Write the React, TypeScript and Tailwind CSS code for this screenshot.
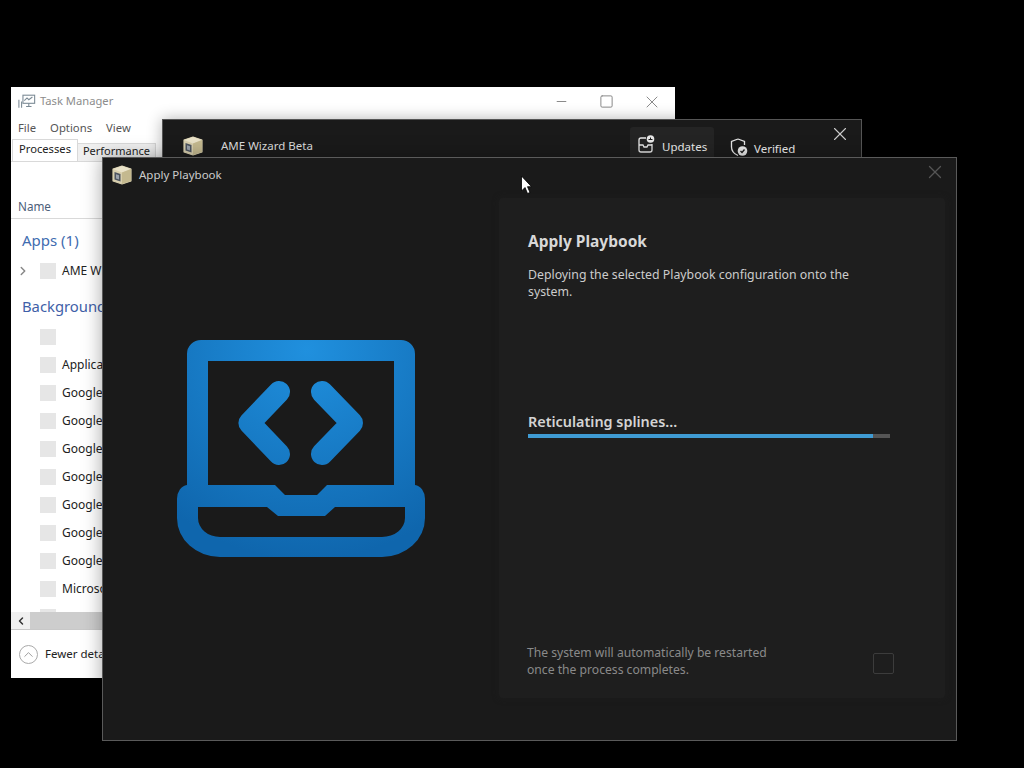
import { ChevronLeft, ChevronRight, ChevronUp, Minus, Square, X } from 'lucide-react';

const backgroundRows = ['', 'Applications', 'Google', 'Google', 'Google', 'Google', 'Google', 'Google', 'Google', 'Microsoft', ''];

function BoxLogo({ className }: { className?: string }) {
  return (
    <svg viewBox="0 0 20 20" className={className}>
      <path d="M10 1 19 4v12l-9 3-9-3V4z" fill="#d8cfae" stroke="#d8cfae" strokeWidth="1.200" strokeLinejoin="round" />
      <path d="M10 1 19 4 10 7.500 1 4z" fill="#e9e2c8" />
      <path d="M10 7.500 19 4v12l-9 3z" fill="#c4b98f" />
      <path d="M2.500 7 8.500 9v7.500l-6-2z" fill="#4d5560" />
      <path d="M4 9.200 7 10.200v4.400l-3-1z" fill="#9aa2ac" />
    </svg>
  );
}

function LaptopCode() {
  return (
    <svg viewBox="0 0 248 217" className="w-[248px] h-[217px]">
      <defs>
        <radialGradient id="laptopBlue" gradientUnits="userSpaceOnUse" cx="130" cy="10" r="210">
          <stop offset="0%" stopColor="#2090de" />
          <stop offset="100%" stopColor="#0f66ad" />
        </radialGradient>
      </defs>
      <path
        fillRule="evenodd"
        fill="url(#laptopBlue)"
        d="M24 0H224A14 14 0 0 1 238 14V145A11 14 0 0 1 248 159V178A43 39 0 0 1 205 217H43A43 39 0 0 1 0 178V159A11 14 0 0 1 10 145V14A14 14 0 0 1 24 0ZM31 21V145H98L108 155H140L150 145H217V21ZM21 167V178A22 19 0 0 0 43 197H205A23 19 0 0 0 228 178V167H158L148 176H101L90 167Z"
      />
      <path
        d="M102 52 72.400 83 102 114M145 52 175 83 145 114"
        fill="none"
        stroke="url(#laptopBlue)"
        strokeWidth="22"
        strokeLinecap="round"
        strokeLinejoin="round"
      />
    </svg>
  );
}

function TaskRow({ label, expand }: { label: string; expand?: boolean }) {
  return (
    <div className="h-[28px] flex items-center shrink-0">
      <div className="w-[29px] flex justify-center pr-[5px]">
        {expand && <ChevronRight className="w-[14px] h-[14px] text-[#888]" strokeWidth={2.500} />}
      </div>
      <div className="w-[16px] h-[16px] bg-[#e6e6e6]" />
      <span className="ml-[6px] text-[12px] text-[#222] whitespace-nowrap">{label}</span>
    </div>
  );
}

function TaskManager() {
  return (
    <div className="absolute left-[11px] top-[87px] w-[664px] h-[591px] bg-white overflow-hidden flex flex-col">
      <div className="h-[29px] shrink-0 flex items-center pl-[7px] pr-[16px]">
        <svg viewBox="0 0 20 16" className="w-[18px] h-[15px] text-[#7b8a95]" fill="none" stroke="currentColor" strokeWidth="1.200">
          <rect x="5.500" y="1" width="13" height="9" />
          <path d="M7 7l3-3 2 2 4-3M12 10v3M9 13.500h6M1 6v9M4 8v7" />
        </svg>
        <span className="ml-[4px] text-[11.200px] text-[#8c8c8c]">Task Manager</span>
        <div className="ml-auto flex items-center gap-[30px] text-[#8a8a8a]">
          <Minus className="w-[15px] h-[15px]" strokeWidth={1.600} />
          <Square className="w-[15px] h-[15px]" strokeWidth={1.600} />
          <X className="w-[20px] h-[20px] -mx-[2.500px]" strokeWidth={1.200} />
        </div>
      </div>
      <div className="h-[24px] shrink-0 flex items-center gap-[14px] pl-[7px] text-[11.300px] text-[#555]">
        <span>File</span>
        <span>Options</span>
        <span>View</span>
      </div>
      <div className="h-[22px] shrink-0 flex items-end border-b border-[#d9d9d9] pl-px">
        <div className="h-[22px] w-[66px] pb-[2px] bg-white border border-b-0 border-[#d9d9d9] flex items-center justify-center text-[11.200px] text-[#222]">Processes</div>
        <div className="h-[18px] w-[78px] pb-[2px] bg-[#f0f0f0] border-r border-t border-[#d9d9d9] flex items-center justify-center text-[11px] text-[#222]">Performance</div>
      </div>
      <div className="h-[57px] shrink-0 flex items-end border-b border-[#d9d9d9] pl-[7px] pb-[2px] text-[11.700px] text-[#4c607a]">Name</div>
      <div className="flex-1 min-h-0 overflow-hidden flex flex-col">
        <div className="h-[38px] shrink-0 flex items-end pl-[11px] pb-[6px] text-[15px] text-[#3f6cb0]">Apps (1)</div>
        <TaskRow label="AME Wizard Beta" expand />
        <div className="h-[38px] shrink-0 flex items-end pl-[11px] pb-[6px] text-[14.800px] text-[#3f5fa8] whitespace-nowrap">Background processes</div>
        {backgroundRows.map((row, i) => (
          <TaskRow key={i} label={row} />
        ))}
      </div>
      <div className="h-[18px] shrink-0 flex bg-[#cdcdcd] border-b border-[#c8c8c8]">
        <div className="w-[19px] bg-[#f0f0f0] flex items-center justify-center">
          <ChevronLeft className="w-[12px] h-[12px] text-[#333]" strokeWidth={3} />
        </div>
      </div>
      <div className="h-[48px] shrink-0 flex items-center pl-[8px] text-[11.500px] text-[#222]">
        <div className="w-[19px] h-[19px] rounded-full border border-[#aaa] flex items-center justify-center">
          <ChevronUp className="w-[15px] h-[15px] text-[#999]" strokeWidth={1.500} />
        </div>
        <span className="ml-[7px] whitespace-nowrap">Fewer details</span>
      </div>
    </div>
  );
}

function WizardWindow() {
  return (
    <div className="absolute left-[162px] top-[119px] w-[700px] h-[120px] bg-[#1a1a1a] border border-[#555] shadow-[0_0_14px_rgba(0,0,0,0.3)]">
      <div className="h-[50px] flex items-start pl-[20px] text-[11.500px] text-[#ddd]">
        <BoxLogo className="w-[20px] h-[20px] mt-[16px] shrink-0" />
        <span className="ml-[18px] mt-[17px] w-[409px] shrink-0">AME Wizard Beta</span>
        <div className="w-[84px] h-[40px] mt-[7px] bg-[#242424] rounded-[3px] flex items-start pl-[8px] pt-[8px] shrink-0">
          <svg viewBox="0 0 17 19" className="w-[17px] h-[19px]" fill="none" stroke="#e8e8e8" strokeWidth="1.300">
            <path d="M8 3H3a2 2 0 0 0-2 2v10a2 2 0 0 0 2 2h9a2 2 0 0 0 2-2V9" />
            <path d="M1 10h4l1 2h3l1-2h4" />
            <circle cx="12.500" cy="4" r="3.800" fill="#e8e8e8" stroke="none" />
            <path d="M10.500 4.500h4M12.500 2.500v2" stroke="#1a1a1a" strokeWidth="1" />
          </svg>
          <span className="ml-[7px] mt-[3px] text-[#eee]">Updates</span>
        </div>
        <div className="ml-[16px] flex items-start mt-[18px] shrink-0">
          <svg viewBox="0 0 18 19" className="w-[18px] h-[19px]" fill="none" stroke="#e8e8e8" strokeWidth="1.300">
            <path d="M8 1 1.500 3.500V9c0 4 3 7 6.500 8.500" />
            <path d="M8 1l6.500 2.500V7" />
            <circle cx="12.500" cy="13" r="4.800" fill="#e8e8e8" stroke="none" />
            <path d="M10.500 13l1.500 1.500 2.500-3" stroke="#1a1a1a" />
          </svg>
          <span className="ml-[6px] mt-[2px] text-[#eee]">Verified</span>
        </div>
        <X className="ml-[34px] mt-[3px] w-[22px] h-[22px] shrink-0 text-[#ccc]" strokeWidth={1.200} />
      </div>
    </div>
  );
}

function PlaybookWindow() {
  return (
    <div className="absolute left-[102px] top-[157px] w-[855px] h-[584px] bg-[#1a1a1a] border border-[#5a5a5a] shadow-[0_0_18px_rgba(0,0,0,0.35)] flex flex-col">
      <div className="h-[40px] shrink-0 flex items-start pl-[9px] pr-[10px]">
        <BoxLogo className="w-[20px] h-[20px] mt-[7px]" />
        <span className="ml-[7px] mt-[8px] text-[11.500px] text-[#ccc]">Apply Playbook</span>
        <X className="ml-auto mt-[3px] w-[22px] h-[22px] text-[#555]" strokeWidth={1.400} />
      </div>
      <div className="h-[500px] shrink-0 flex">
        <div className="w-[396px] shrink-0 flex items-center justify-center">
          <LaptopCode />
        </div>
        <div className="w-[446px] shrink-0 bg-[#1e1e1e] rounded-[4px] shadow-[0_0_6px_#1d1d1d] pl-[29px] flex flex-col">
          <h1 className="mt-[32px] text-[15.500px] leading-[22px] font-bold text-[#d8d8d8]">Apply Playbook</h1>
          <p className="mt-[14px] w-[340px] text-[12.300px] leading-[17px] text-[#cccccc]">
            Deploying the selected Playbook configuration onto the system.
          </p>
          <div className="mt-[112px] text-[14.400px] leading-[20px] font-semibold text-[#d4d4d4]">Reticulating splines...</div>
          <div className="mt-[2px] w-[362px] h-[4px] bg-[#555]">
            <div className="h-full bg-[#3f9bd3]" style={{ width: '95.3%' }} />
          </div>
          <div className="mt-auto mb-[20px] -ml-px pr-[51px] flex items-center justify-between">
            <p className="text-[12.150px] leading-[17px] text-[#8a8a8a]">
              The system will automatically be restarted
              <br />
              once the process completes.
            </p>
            <div className="mt-[4px] w-[21px] h-[21px] rounded-[2px] border border-[#3c3c3c]" />
          </div>
        </div>
      </div>
    </div>
  );
}

export default function App() {
  return (
    <div className="relative w-[1024px] h-[768px] bg-black overflow-hidden font-['Noto_Sans','Open_Sans',sans-serif]">
      <TaskManager />
      <WizardWindow />
      <PlaybookWindow />
      <svg viewBox="0 0 12 20" className="absolute left-[520px] top-[175px] w-[13px] h-[20px]">
        <path d="M1 1v15l3.500-3.500 2.500 6 2.500-1-2.500-5.800H11z" fill="#fff" stroke="#000" strokeWidth="0.800" />
      </svg>
    </div>
  );
}
